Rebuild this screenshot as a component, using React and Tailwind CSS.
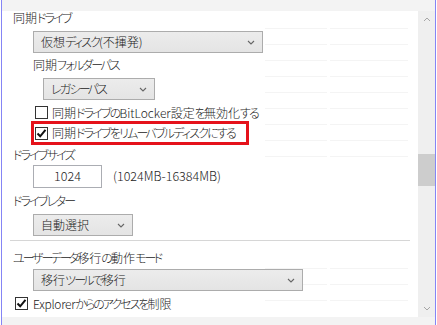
import React from "react";

const font = { fontFamily: '"Noto Sans CJK JP", "Noto Sans", sans-serif', fontFeatureSettings: '"palt"' };

function J({ t, tight }) {
  const parts = t.match(/[\u4e00-\u9fff]+|\u30fc+|[\u3040-\u30fb\u30fd-\u30ff]+|[^\u3040-\u30ff\u4e00-\u9fff]+/g) || [];
  return (
    <>
      {parts.map((p, i) => {
        let cls = tight ? "tracking-[-0.3px]" : "tracking-normal";
        if (/^[\u4e00-\u9fff]/.test(p)) cls = "tracking-normal";
        else if (/^\u30fc/.test(p)) cls = "tracking-[-3px]";
        else if (/^[\u3040-\u30ff]/.test(p)) cls = tight ? "tracking-[-2px]" : "tracking-[-1.8px]";
        return (
          <span key={i} className={cls}>
            {p}
          </span>
        );
      })}
    </>
  );
}

function Chevron() {
  return (
    <svg width="8" height="5" viewBox="0 0 8 5">
      <path d="M1 1 L4 4 L7 1" fill="none" stroke="#666" strokeWidth="1.1" />
    </svg>
  );
}

function Dropdown({ t, w, ml }) {
  return (
    <div
      className={`flex h-[22px] items-center justify-between border border-[#acacac] bg-[linear-gradient(#ececec,#e4e4e4)] pl-[7px] pr-[7px] ${ml} ${w}`}
    >
      <span className="whitespace-nowrap text-[12px] leading-[14px] text-[#222]">
        <J t={t} />
      </span>
      <Chevron />
    </div>
  );
}

function Check({ checked }) {
  return (
    <div className="flex h-[13px] w-[13px] shrink-0 items-center justify-center border border-[#333] bg-white">
      {checked && (
        <svg width="11" height="11" viewBox="0 0 11 11">
          <path d="M1.5 5.5 L4.2 8.3 L9.5 1.8" fill="none" stroke="#111" strokeWidth="2" />
        </svg>
      )}
    </div>
  );
}

export default function App() {
  const lineYs = [17, 33, 49, 65, 81, 97, 113, 129, 145, 257, 273, 289];
  return (
    <div className="flex h-[325px] w-[437px] overflow-hidden bg-white font-light text-[#1a1a1a]" style={font}>
      <div className="w-[1px] bg-white" />
      <div className="w-[1px] bg-[#8585f5]" />
      <div className="flex w-[433px] flex-col">
        <div className="h-[11px] bg-[#f3f3f3]" />
        <div className="flex h-[306px]">
          <div className="relative flex w-[416px] flex-col whitespace-nowrap text-[12px]">
            <div className="pointer-events-none absolute left-[263px] top-0 h-full w-[143px]">
              {lineYs.map((y) => (
                <div key={y} className="absolute flex w-full gap-[3px]" style={{ top: y }}>
                  <div className="h-px w-[62px] bg-[#f4f4f4]" />
                  <div className="h-px flex-1 bg-[#f4f4f4]" />
                </div>
              ))}
            </div>
            <div className="relative flex flex-col">
              <div className="ml-[11px] h-[14px] leading-[14px]">
                <J t="同期ドライブ" />
              </div>
              <div className="mt-[6px]">
                <Dropdown t="仮想ディスク(不揮発)" w="w-[230px]" ml="ml-[31px]" />
              </div>
              <div className="ml-[31px] mt-[5px] h-[14px] leading-[14px]">
                <J t="同期フォルダーパス" />
              </div>
              <div className="mt-[6px]">
                <Dropdown t="レガシーパス" w="w-[112px]" ml="ml-[41px]" />
              </div>
              <div className="ml-[33px] mt-[6px] flex h-[13px] items-center gap-[4px]">
                <Check />
                <span className="leading-[14px]">
                  <J t="同期ドライブのBitLocker設定を無効化する" />
                </span>
              </div>
              <div className="ml-[29px] mt-[2px] flex h-[24px] w-[218px] items-center gap-[4px] border-[3px] border-[#e5121b] pl-[1px]">
                <Check checked />
                <span className="leading-[14px]">
                  <J t="同期ドライブをリムーバブルディスクにする" />
                </span>
              </div>
              <div className="ml-[11px] mt-[3px] h-[14px] leading-[14px]">
                <J t="ドライブサイズ" />
              </div>
              <div className="ml-[31px] mt-[3px] flex h-[23px] items-center">
                <div className="flex h-[23px] w-[69px] items-center justify-center border border-[#abadb3] bg-white text-[12.5px]">
                  1024
                </div>
                <span className="ml-[11px] text-[12.5px]">(1024MB-16384MB)</span>
              </div>
              <div className="ml-[11px] mt-[6px] h-[14px] leading-[14px]">
                <J t="ドライブレター" />
              </div>
              <div className="mt-[6px]">
                <Dropdown t="自動選択" w="w-[100px]" ml="ml-[31px]" />
              </div>
              <div className="ml-[8px] mt-[4px] h-px w-[400px] bg-[#d6d6d6]" />
              <div className="ml-[11px] mt-[10px] h-[14px] leading-[14px]">
                <J t="ユーザーデータ移行の動作モード" />
              </div>
              <div className="mt-[4px]">
                <Dropdown t="移行ツールで移行" w="w-[270px]" ml="ml-[31px]" />
              </div>
              <div className="ml-[13px] mt-[6px] flex h-[13px] items-center gap-[5px]">
                <Check checked />
                <span className="leading-[14px]">
                  <J t="Explorerからのアクセスを制限" tight />
                </span>
              </div>
            </div>
          </div>
          <div className="flex w-[17px] flex-col items-center bg-[#efefef]">
            <div className="flex h-[17px] items-center justify-center">
              <svg width="8" height="5" viewBox="0 0 8 5">
                <path d="M1 4 L4 1 L7 4" fill="none" stroke="#a6a6a6" strokeWidth="1" />
              </svg>
            </div>
            <div className="h-[126px]" />
            <div className="h-[32px] w-full bg-[#cdcdcd]" />
            <div className="flex-1" />
            <div className="flex h-[17px] items-center justify-center">
              <svg width="8" height="5" viewBox="0 0 8 5">
                <path d="M1 1 L4 4 L7 1" fill="none" stroke="#a6a6a6" strokeWidth="1" />
              </svg>
            </div>
          </div>
        </div>
        <div className="h-[8px] bg-[#f3f3f3]" />
      </div>
      <div className="w-[1px] bg-[#8585f5]" />
      <div className="w-[1px] bg-white" />
    </div>
  );
}
